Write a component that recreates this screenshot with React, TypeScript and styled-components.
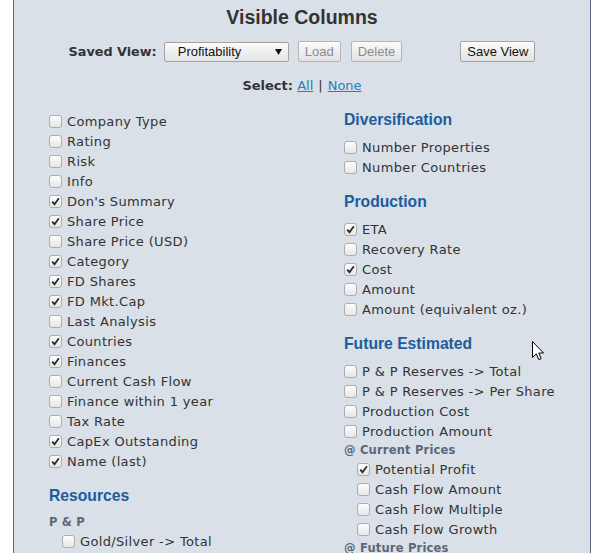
import React from 'react';
import styled, { createGlobalStyle } from 'styled-components';

const GlobalStyle = createGlobalStyle`
  html, body {
    margin: 0;
    padding: 0;
    background: #ffffff;
  }
`;

type Item = { label: string; checked?: boolean; indent?: boolean };
type Block =
  | { kind: 'heading'; text: string }
  | { kind: 'sub'; text: string }
  | { kind: 'item'; item: Item };

const h = (text: string): Block => ({ kind: 'heading', text });
const s = (text: string): Block => ({ kind: 'sub', text });
const i = (label: string, checked = false, indent = false): Block => ({
  kind: 'item',
  item: { label, checked, indent },
});

const leftColumn: Block[] = [
  i('Company Type'),
  i('Rating'),
  i('Risk'),
  i('Info'),
  i("Don's Summary", true),
  i('Share Price', true),
  i('Share Price (USD)'),
  i('Category', true),
  i('FD Shares', true),
  i('FD Mkt.Cap', true),
  i('Last Analysis'),
  i('Countries', true),
  i('Finances', true),
  i('Current Cash Flow'),
  i('Finance within 1 year'),
  i('Tax Rate'),
  i('CapEx Outstanding', true),
  i('Name (last)', true),
  h('Resources'),
  s('P & P'),
  i('Gold/Silver -> Total', false, true),
];

const rightColumn: Block[] = [
  h('Diversification'),
  i('Number Properties'),
  i('Number Countries'),
  h('Production'),
  i('ETA', true),
  i('Recovery Rate'),
  i('Cost', true),
  i('Amount'),
  i('Amount (equivalent oz.)'),
  h('Future Estimated'),
  i('P & P Reserves -> Total'),
  i('P & P Reserves -> Per Share'),
  i('Production Cost'),
  i('Production Amount'),
  s('@ Current Prices'),
  i('Potential Profit', true, true),
  i('Cash Flow Amount', false, true),
  i('Cash Flow Multiple', false, true),
  i('Cash Flow Growth', false, true),
  s('@ Future Prices'),
];

const Panel = styled.div`
  position: relative;
  box-sizing: border-box;
  margin-left: 13px;
  width: 578px;
  min-height: 600px;
  background: #d9e0e7;
  border-left: 1px solid #5a6680;
  border-right: 1px solid #5a6680;
  padding: 5px 0 20px;
  color: #333333;
  font-family: 'DejaVu Sans', Verdana, sans-serif;
`;

const Title = styled.h1`
  margin: 0;
  font-family: 'Liberation Sans', Arial, sans-serif;
  font-weight: bold;
  font-size: 19.5px;
  line-height: 24px;
  text-align: center;
  color: #333333;
`;

const Toolbar = styled.div`
  display: flex;
  align-items: center;
  justify-content: center;
  margin-top: 12px;
  height: 21px;
`;

const Label = styled.span`
  font-weight: bold;
  font-size: 12.8px;
  color: #333333;
`;

const SelectBox = styled.div`
  box-sizing: border-box;
  display: flex;
  align-items: center;
  justify-content: space-between;
  margin-left: 7px;
  width: 125px;
  height: 20px;
  padding: 0 6px 0 13px;
  border: 1px solid #a3a3a3;
  border-radius: 2px;
  background: linear-gradient(#fbfbfb, #e4e4e4);
  font-family: 'Liberation Sans', Arial, sans-serif;
  font-size: 13px;
  color: #111111;
`;

const Button = styled.button<{ $gap: number }>`
  box-sizing: border-box;
  margin-left: ${(p) => p.$gap}px;
  height: 21px;
  padding: 0 6px;
  border: 1px solid #a3a3a3;
  border-radius: 2px;
  background: linear-gradient(#fbfbfb, #e2e2e2);
  font-family: 'Liberation Sans', Arial, sans-serif;
  font-size: 13px;
  color: #111111;
  &:disabled {
    color: #8c8c8c;
    border-color: #b4b4b4;
  }
`;

const SelectLine = styled.div`
  margin-top: 16px;
  text-align: center;
  font-size: 13px;
  line-height: 16px;
  color: #333333;
`;

const Link = styled.a`
  color: #2a7bbf;
  text-decoration: underline;
  cursor: pointer;
`;

const Sep = styled.span`
  margin: 0 5px;
  color: #333333;
`;

const Columns = styled.div`
  display: grid;
  grid-template-columns: 295px 1fr;
  margin-top: 15px;
  padding-left: 35px;
`;

const Column = styled.div<{ $offset: number }>`
  display: flex;
  flex-direction: column;
  padding-top: ${(p) => p.$offset}px;
`;

const Heading = styled.h2`
  margin: 14px 0 8px;
  padding-top: 2px;
  font-family: 'Liberation Sans', Arial, sans-serif;
  font-size: 15.7px;
  font-weight: bold;
  line-height: 18px;
  color: #1e5c9c;
  &:first-child {
    margin-top: 0;
  }
`;

const SubHeading = styled.div`
  font-weight: bold;
  font-size: 11.5px;
  line-height: 18px;
  letter-spacing: 0.2px;
  color: #5c6877;
`;

const Row = styled.label<{ $indent: boolean }>`
  display: flex;
  align-items: center;
  height: 20px;
  padding-left: ${(p) => (p.$indent ? 13 : 0)}px;
  font-size: 13px;
  letter-spacing: 0.35px;
  color: #333333;
  white-space: nowrap;
`;

const Box = styled.span`
  box-sizing: border-box;
  display: inline-flex;
  align-items: center;
  justify-content: center;
  flex: none;
  width: 13px;
  height: 13px;
  margin-right: 5px;
  border: 1px solid #adadad;
  border-radius: 3px;
  background: linear-gradient(#fdfdfd, #e6e6e6);
`;

const Cursor = styled.svg`
  position: absolute;
  left: 518px;
  top: 341px;
  pointer-events: none;
`;

const Check = ({ checked }: { checked: boolean }) => (
  <Box>
    {checked && (
      <svg width="9" height="9" viewBox="0 0 9 9">
        <path d="M1.2 4.6 L3.5 7.2 L7.9 1.3" fill="none" stroke="#2b2b2b" strokeWidth="1.8" />
      </svg>
    )}
  </Box>
);

const renderBlock = (b: Block, idx: number) => {
  if (b.kind === 'heading') return <Heading key={idx}>{b.text}</Heading>;
  if (b.kind === 'sub') return <SubHeading key={idx}>{b.text}</SubHeading>;
  return (
    <Row key={idx} $indent={!!b.item.indent}>
      <Check checked={!!b.item.checked} />
      {b.item.label}
    </Row>
  );
};

export default function App() {
  return (
    <>
      <GlobalStyle />
      <Panel>
        <Title>Visible Columns</Title>
        <Toolbar>
          <Label>Saved View:</Label>
          <SelectBox>
            <span>Profitability</span>
            <svg width="7" height="6" viewBox="0 0 7 6">
              <path d="M0 0 H7 L3.5 6 Z" fill="#111" />
            </svg>
          </SelectBox>
          <Button $gap={9} disabled>
            Load
          </Button>
          <Button $gap={10} disabled>
            Delete
          </Button>
          <Button $gap={58}>Save View</Button>
        </Toolbar>
        <SelectLine>
          <b>Select:</b> <Link>All</Link>
          <Sep>|</Sep>
          <Link>None</Link>
        </SelectLine>
        <Columns>
          <Column $offset={2}>{leftColumn.map(renderBlock)}</Column>
          <Column $offset={0}>{rightColumn.map(renderBlock)}</Column>
        </Columns>
        <Cursor width="13" height="21" viewBox="0 0 13 21">
          <path
            d="M0.5 0.5 L0.5 16.5 L4.3 12.8 L6.8 18.6 L9.2 17.6 L6.8 12 L11.5 12 Z"
            fill="#ffffff"
            stroke="#000000"
            strokeWidth="1"
            strokeLinejoin="round"
          />
        </Cursor>
      </Panel>
    </>
  );
}
